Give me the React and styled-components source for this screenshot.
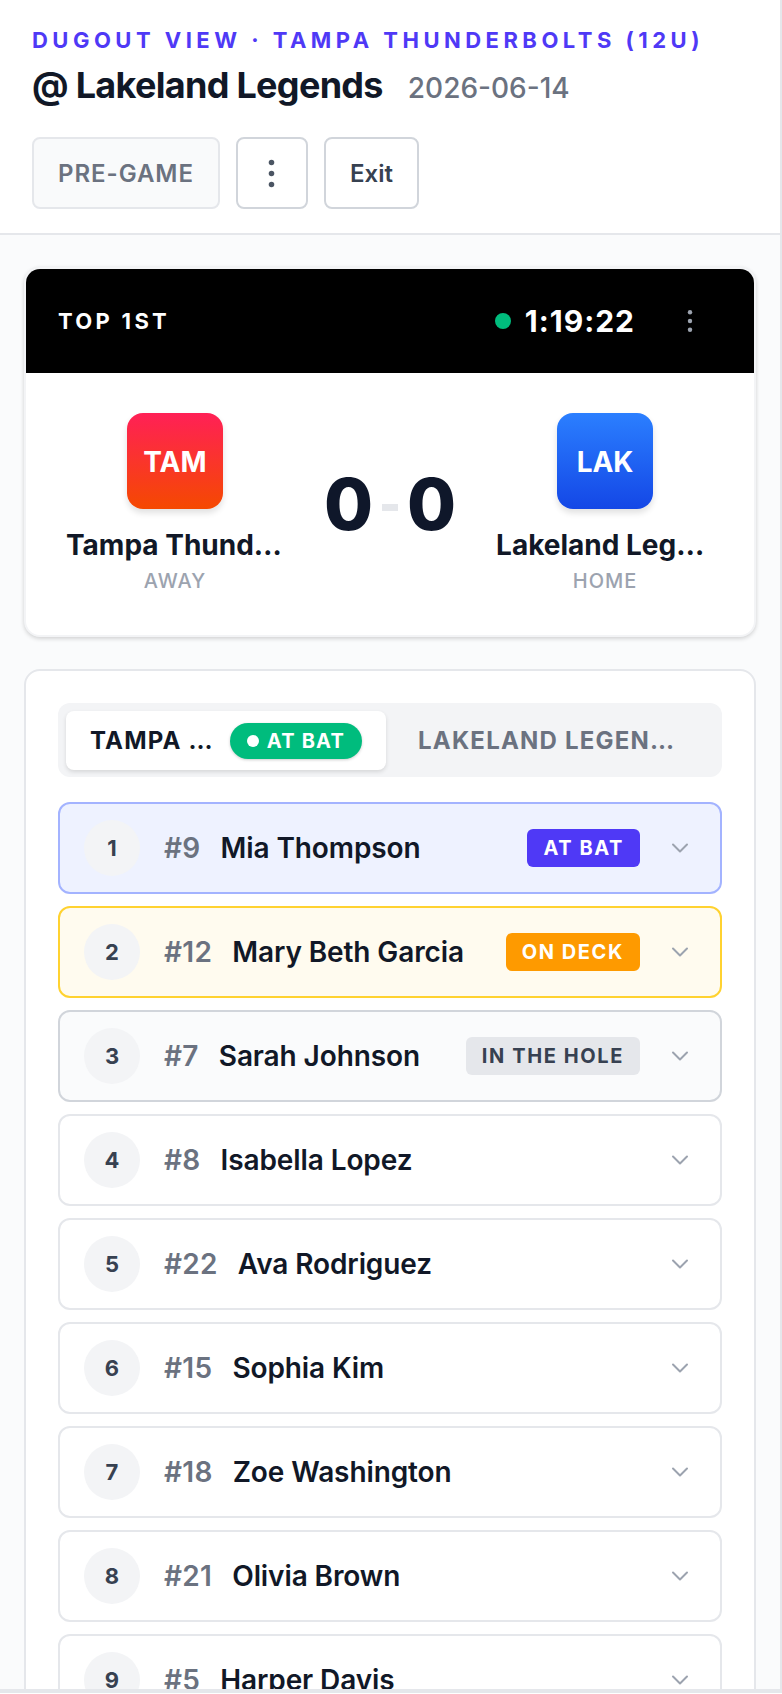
import React from 'react'
import styled, { createGlobalStyle } from 'styled-components'

const GlobalStyle = createGlobalStyle`
  * { box-sizing: border-box; }
  html, body { margin: 0; padding: 0; background: #fff; }
  body { font-family: Inter, "Noto Sans", sans-serif; color: #111827; }
`

const Page = styled.div`
  width: 782px;
  height: 1694px;
  overflow: hidden;
  display: flex;
  flex-direction: column;
`

const Frame = styled.div`
  height: 1693px;
  overflow: hidden;
  background: #fafbfc;
  border-right: 2px solid #e5e7eb;
  border-bottom: 4px solid #e5e7eb;
`

const Header = styled.header`
  background: #fff;
  border-bottom: 2px solid #e5e7eb;
  padding: 24px 32px 26px;
  height: 235px;
`

const Eyebrow = styled.div`
  font-size: 22px;
  line-height: 32px;
  font-weight: 700;
  letter-spacing: 4.48px;
  color: #4f39f6;
  white-space: nowrap;
`

const TitleRow = styled.div`
  display: flex;
  align-items: baseline;
  gap: 25px;
  margin-top: 6px;
`

const Title = styled.h1`
  margin: 0;
  font-size: 36px;
  line-height: 46px;
  font-weight: 700;
  letter-spacing: -0.7px;
`

const DateLabel = styled.span`
  font-size: 28px;
  font-weight: 500;
  color: #6b7280;
`

const Actions = styled.div`
  display: flex;
  gap: 16px;
  margin-top: 29px;
`

const Button = styled.button`
  height: 72px;
  width: ${p => p.$width || 'auto'};
  padding: 0 ${p => (p.$width ? '0' : '24px')};
  display: flex;
  align-items: center;
  justify-content: center;
  border: 2px solid ${p => (p.$muted ? '#e5e7eb' : '#d1d5db')};
  border-radius: 8px;
  background: ${p => (p.$muted ? '#f9fafb' : '#fff')};
  color: ${p => (p.$muted ? '#6b7280' : '#374151')};
  font-family: inherit;
  font-size: 24px;
  font-weight: 600;
  letter-spacing: ${p => (p.$muted ? '0.96px' : '0')};
`

const Main = styled.main`
  padding: 32px 24px;
  display: flex;
  flex-direction: column;
  gap: 32px;
`

const ScoreCard = styled.section`
  background: #fff;
  border: 2px solid #f3f4f6;
  border-radius: 16px;
  overflow: hidden;
  height: 370px;
  box-shadow: 0 2px 4px rgba(0, 0, 0, 0.14), 0 0 4px rgba(0, 0, 0, 0.04);
`

const ScoreBar = styled.div`
  height: 104px;
  background: #000;
  color: #fff;
  display: flex;
  align-items: center;
  padding: 0 50px 0 32px;
`

const Inning = styled.div`
  font-size: 22px;
  font-weight: 700;
  letter-spacing: 3.3px;
  flex: 1;
`

const LiveDot = styled.span`
  width: 16px;
  height: 16px;
  border-radius: 50%;
  background: #00bc7d;
  margin-right: 14px;
`

const Clock = styled.div`
  font-size: 30px;
  font-weight: 700;
  letter-spacing: 1px;
  margin-right: 41px;
`

const ScoreBody = styled.div`
  display: grid;
  grid-template-columns: 1fr auto 1fr;
  column-gap: 32px;
  align-items: start;
  padding: 40px 32px 0;
`

const Team = styled.div`
  display: flex;
  flex-direction: column;
  align-items: center;
  min-width: 0;
`

const Badge = styled.div`
  width: 96px;
  height: 96px;
  padding-top: 1px;
  border-radius: 16px;
  display: flex;
  align-items: center;
  justify-content: center;
  color: #fff;
  font-size: 28px;
  font-weight: 700;
  background: ${p => p.$gradient};
  box-shadow: 0 4px 6px rgba(0, 0, 0, 0.12);
`

const TeamName = styled.div`
  margin-top: 18px;
  width: 218px;
  font-size: 28px;
  line-height: 36px;
  font-weight: 700;
  white-space: nowrap;
  overflow: hidden;
  text-overflow: ellipsis;
  text-align: center;
`

const TeamSide = styled.div`
  margin-top: 5px;
  font-size: 20px;
  line-height: 26px;
  font-weight: 500;
  letter-spacing: 1px;
  color: #9ca3af;
`

const Score = styled.div`
  display: flex;
  align-items: center;
  gap: 9px;
  margin-top: 49px;
  font-size: 71px;
  line-height: 84px;
  font-weight: 800;
  color: #0f172a;
`

const ScoreDash = styled.span`
  width: 16px;
  height: 7px;
  margin-top: 6px;
  background: #e5e7eb;
`

const LineupCard = styled.section`
  background: #fff;
  border: 2px solid #e5e7eb;
  border-radius: 16px;
  padding: 32px;
`

const Tabs = styled.div`
  display: grid;
  grid-template-columns: 320px 1fr;
  height: 74px;
  padding: 8px;
  background: #f3f4f6;
  border-radius: 12px;
`

const Tab = styled.div`
  display: flex;
  align-items: center;
  gap: 16px;
  height: 59px;
  padding: 0 ${p => (p.$active ? '24px' : '32px')};
  border-radius: 8px;
  min-width: 0;
  background: ${p => (p.$active ? '#fff' : 'transparent')};
  color: ${p => (p.$active ? '#111827' : '#6b7280')};
  box-shadow: ${p => (p.$active ? '0 2px 4px rgba(0, 0, 0, 0.12)' : 'none')};
  font-size: 24px;
  font-weight: 700;
  letter-spacing: 1.2px;
`

const TabLabel = styled.span`
  min-width: 0;
  flex: 1;
  white-space: nowrap;
  overflow: hidden;
  text-overflow: ellipsis;
`

const Pill = styled.span`
  flex: none;
  display: flex;
  align-items: center;
  gap: 8px;
  height: 36px;
  padding: 0 17px;
  border-radius: 18px;
  background: #00bc7d;
  color: #fff;
  font-size: 20px;
  font-weight: 700;
  letter-spacing: 1.2px;
  box-shadow: 0 1px 3px rgba(0, 0, 0, 0.2);
`

const PillDot = styled.i`
  width: 12px;
  height: 12px;
  border-radius: 50%;
  background: #fff;
`

const List = styled.div`
  display: flex;
  flex-direction: column;
  gap: 12px;
  margin-top: 25px;
`

const rowThemes = {
  bat: { bg: '#eef2ff', border: '#a3b3ff' },
  deck: { bg: '#fffbef', border: '#ffd230' },
  hole: { bg: '#fafbfc', border: '#d1d5db' },
  idle: { bg: '#fff', border: '#e5e7eb' },
}

const Row = styled.div`
  display: flex;
  align-items: center;
  flex: none;
  height: 92px;
  padding: 0 24px;
  border: 2px solid ${p => rowThemes[p.$state].border};
  border-radius: 12px;
  background: ${p => rowThemes[p.$state].bg};
`

const Order = styled.div`
  flex: none;
  width: 56px;
  height: 56px;
  border-radius: 50%;
  background: #f3f4f6;
  display: flex;
  align-items: center;
  justify-content: center;
  font-size: 22px;
  font-weight: 700;
  color: #374151;
  margin-right: 24px;
`

const Jersey = styled.span`
  font-size: 28px;
  font-weight: 600;
  letter-spacing: 0.3px;
  color: #6b7280;
  margin-right: 20px;
`

const Name = styled.span`
  flex: 1;
  font-size: 28px;
  font-weight: 600;
  letter-spacing: -0.1px;
  color: #111827;
  white-space: nowrap;
`

const statusThemes = {
  bat: { bg: '#4f39f6', color: '#fff' },
  deck: { bg: '#fe9a00', color: '#fff' },
  hole: { bg: '#e5e7eb', color: '#374151' },
}

const Status = styled.span`
  height: 38px;
  padding: 0 16px;
  display: flex;
  align-items: center;
  border-radius: 6px;
  background: ${p => statusThemes[p.$state].bg};
  color: ${p => statusThemes[p.$state].color};
  font-size: 20px;
  font-weight: 700;
  letter-spacing: 1.6px;
  white-space: nowrap;
`

const Chevron = styled.svg`
  flex: none;
  width: 20px;
  height: 20px;
  margin-left: 30px;
  margin-right: 6px;
  color: #9ca3af;
`

const Dots = ({ size = 28, color = '#4b5563' }) => (
  <svg width={size} height={size} viewBox="0 0 24 24" fill={color}>
    <circle cx="12" cy="4.5" r="1.9" />
    <circle cx="12" cy="12" r="1.9" />
    <circle cx="12" cy="19.5" r="1.9" />
  </svg>
)

const players = [
  { n: 1, num: '#9', name: 'Mia Thompson', state: 'bat', label: 'AT BAT' },
  { n: 2, num: '#12', name: 'Mary Beth Garcia', state: 'deck', label: 'ON DECK' },
  { n: 3, num: '#7', name: 'Sarah Johnson', state: 'hole', label: 'IN THE HOLE' },
  { n: 4, num: '#8', name: 'Isabella Lopez', state: 'idle' },
  { n: 5, num: '#22', name: 'Ava Rodriguez', state: 'idle' },
  { n: 6, num: '#15', name: 'Sophia Kim', state: 'idle' },
  { n: 7, num: '#18', name: 'Zoe Washington', state: 'idle' },
  { n: 8, num: '#21', name: 'Olivia Brown', state: 'idle' },
  { n: 9, num: '#5', name: 'Harper Davis', state: 'idle' },
]

export default function App() {
  return (
    <Page>
      <GlobalStyle />
      <Frame>
        <Header>
          <Eyebrow>DUGOUT VIEW · TAMPA THUNDERBOLTS (12U)</Eyebrow>
          <TitleRow>
            <Title>@ Lakeland Legends</Title>
            <DateLabel>2026-06-14</DateLabel>
          </TitleRow>
          <Actions>
            <Button $muted>PRE-GAME</Button>
            <Button $width="72px"><Dots size={35} /></Button>
            <Button>Exit</Button>
          </Actions>
        </Header>
        <Main>
          <ScoreCard>
            <ScoreBar>
              <Inning>TOP 1ST</Inning>
              <LiveDot />
              <Clock>1:19:22</Clock>
              <Dots color="#9ca3af" />
            </ScoreBar>
            <ScoreBody>
              <Team>
                <Badge $gradient="linear-gradient(180deg, #ff2056, #f54900)">TAM</Badge>
                <TeamName>Tampa Thunderbolts</TeamName>
                <TeamSide>AWAY</TeamSide>
              </Team>
              <Score>0<ScoreDash />0</Score>
              <Team>
                <Badge $gradient="linear-gradient(180deg, #2b7fff, #1447e6)">LAK</Badge>
                <TeamName>Lakeland Legends</TeamName>
                <TeamSide>HOME</TeamSide>
              </Team>
            </ScoreBody>
          </ScoreCard>
          <LineupCard>
            <Tabs>
              <Tab $active>
                <TabLabel>TAMPA THUNDERBOLTS</TabLabel>
                <Pill><PillDot />AT BAT</Pill>
              </Tab>
              <Tab><TabLabel>LAKELAND LEGENDS</TabLabel></Tab>
            </Tabs>
            <List>
              {players.map(p => (
                <Row key={p.n} $state={p.state}>
                  <Order>{p.n}</Order>
                  <Jersey>{p.num}</Jersey>
                  <Name>{p.name}</Name>
                  {p.label && <Status $state={p.state}>{p.label}</Status>}
                  <Chevron viewBox="0 0 20 20" fill="none" stroke="currentColor" strokeWidth="2" strokeLinecap="round" strokeLinejoin="round">
                    <path d="M3 6.5l7 7 7-7" />
                  </Chevron>
                </Row>
              ))}
            </List>
          </LineupCard>
        </Main>
      </Frame>
    </Page>
  )
}
